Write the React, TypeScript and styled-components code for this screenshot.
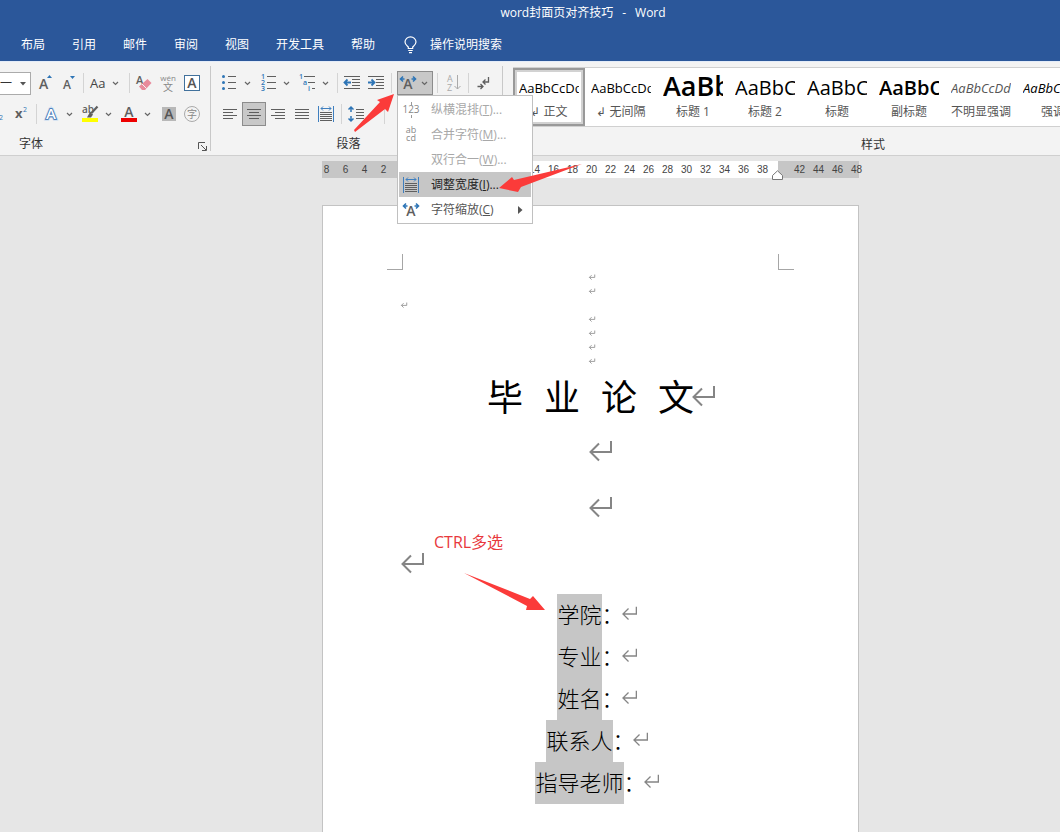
import React from 'react';
import styled, { createGlobalStyle, css } from 'styled-components';

const GlobalStyle = createGlobalStyle`
  * { box-sizing: border-box; }
  body {
    margin: 0;
    background: #e6e6e6;
    overflow: hidden;
    font: 12px/16px "Open Sans", "Noto Sans CJK SC", sans-serif;
    color: #444;
  }
  button, select { font: inherit; color: inherit; }
  svg { overflow: visible; }
`;

const Shell = styled.div`
  min-height: 100vh;
  display: flex;
  flex-direction: column;
  overflow: hidden;
`;

/* ---------- header ---------- */
const Header = styled.header`
  background: #2b579a;
  color: #fff;
  height: 61px;
`;
const TitleBar = styled.div`
  display: flex;
  justify-content: center;
  gap: 9px;
  height: 29px;
  padding: 5px 0 0 106px;
`;
const Tabs = styled.nav`
  display: flex;
  align-items: center;
  height: 32px;
  padding-left: 21px;
  gap: 27px;
`;
const Tab = styled.button`
  border: 0;
  padding: 0;
  background: none;
  white-space: nowrap;
`;
const TellMe = styled(Tab)`
  display: flex;
  align-items: center;
  gap: 13px;
  padding-left: 2px;
`;

/* ---------- ribbon ---------- */
const Ribbon = styled.section`
  position: relative;
  z-index: 2;
  display: flex;
  height: 95px;
  background: #f3f3f3;
  border-top: 1px solid #e3ecf9;
  border-bottom: 1px solid #cfcfcf;
`;
const Group = styled.div<{ $w: number }>`
  display: flex;
  flex-direction: column;
  flex: none;
  width: ${p => p.$w}px;
  padding-top: 9px;
`;
const GroupDivider = styled.div`
  flex: none;
  width: 1px;
  margin: 4px 0;
  background: #c8c8c8;
`;
const Row = styled.div<{ $indent?: number }>`
  display: flex;
  align-items: center;
  height: 24px;
  margin-bottom: 7px;
  padding-left: ${p => p.$indent ?? 0}px;
`;
const Sep = styled.div<{ $w?: number }>`
  flex: none;
  width: ${p => p.$w ?? 5}px;
  height: 20px;
  background: linear-gradient(#d4d4d4, #d4d4d4) center / 1px 100% no-repeat;
`;
const GroupLabel = styled.div<{ $left?: number }>`
  display: flex;
  flex: 1;
  align-items: center;
  justify-content: ${p => (p.$left ? 'flex-start' : 'center')};
  padding-left: ${p => p.$left ?? 0}px;
  color: #333;
`;
const Launcher = styled.button`
  display: flex;
  margin-left: auto;
  padding: 4px 3px 0 0;
  border: 0;
  background: none;
`;
const LauncherSpace = styled.span`
  width: 16px;
`;
const LabelText = styled.span<{ $grow?: boolean }>`
  flex: ${p => (p.$grow ? 1 : 'none')};
  text-align: center;
`;
const Tool = styled.button<{ $w?: number; $on?: boolean }>`
  display: flex;
  flex: none;
  align-items: center;
  justify-content: center;
  width: ${p => p.$w ?? 24}px;
  height: 24px;
  padding: 0;
  background: none;
  border: 0;
  ${p => p.$on && css`
    background: #c8c8c8;
    border: 1px solid #8c8c8c;
  `}
`;
const Split = styled.button`
  display: flex;
  flex: none;
  align-items: center;
  width: 39px;
  height: 24px;
  padding: 0;
  border: 0;
  background: none;
`;
const SplitChevron = styled.span`
  display: flex;
  justify-content: center;
  width: 14px;
`;
const SizeBox = styled.div`
  position: relative;
  width: 31px;
  height: 24px;
  margin-right: 2px;
  padding-top: 1px;
`;
const SizeSelect = styled.select`
  appearance: none;
  width: 31px;
  height: 23px;
  padding: 0;
  border: 1px solid #ababab;
  border-left: 0;
  border-radius: 0;
  background: #fff;
  color: #333;
`;
const SizeCaret = styled.svg`
  position: absolute;
  right: 5px;
  top: 11px;
  pointer-events: none;
`;
const Anchor = styled.div`
  position: relative;
  flex: none;
  margin-left: 3px;
`;

/* ---------- drop-down menu ---------- */
const Menu = styled.div`
  position: absolute;
  z-index: 3;
  left: 0;
  top: 24px;
  width: 136px;
  padding: 1px;
  background: #fff;
  border: 1px solid #c0c0c0;
`;
const MenuItem = styled.button<{ $hot?: boolean }>`
  display: flex;
  align-items: center;
  width: 100%;
  height: 25px;
  padding: 0 8px 0 0;
  border: 0;
  text-align: left;
  white-space: nowrap;
  background: ${p => (p.$hot ? '#c6c6c6' : 'transparent')};
  color: ${p => (p.$hot ? '#222' : '#555')};
  &:disabled { color: #a8a8a8; }
`;
const MenuIcon = styled.span`
  display: flex;
  justify-content: center;
  width: 24px;
  margin-right: 8px;
`;
const MenuText = styled.span`
  flex: 1;
`;

/* ---------- style gallery ---------- */
const StylesGroup = styled.div`
  display: flex;
  flex-direction: column;
  flex: none;
  width: 730px;
  padding: 5px 0 0 10px;
`;
const Gallery = styled.div`
  display: flex;
  height: 60px;
  margin-bottom: 8px;
  background: #fff;
  border: 1px solid #d0d0d0;
  border-left: 0;
`;
const StyleCard = styled.button<{ $on?: boolean }>`
  flex: none;
  width: 72px;
  height: 58px;
  padding: 2px 6px 6px;
  border: 0;
  background: #fff;
  text-align: center;
  white-space: nowrap;
  color: #555;
  ${p => p.$on && css`
    box-shadow: inset 0 0 0 2px #999, inset 0 0 0 4px #d2d2d2;
  `}
`;
const Sample = styled.span<{ $size: number; $bold?: boolean; $italic?: boolean; $color?: string }>`
  display: block;
  height: 34px;
  overflow: hidden;
  text-align: left;
  font-size: ${p => p.$size}px;
  line-height: ${p => (p.$size > 24 ? 32 : 36)}px;
  font-weight: ${p => (p.$bold ? 600 : 400)};
  font-style: ${p => (p.$italic ? 'italic' : 'normal')};
  color: ${p => p.$color ?? '#000'};
`;
const CardName = styled.span`
  display: block;
`;

/* ---------- document ---------- */
const Work = styled.main`
  display: flex;
  flex: 1;
  flex-direction: column;
  align-items: center;
  padding: 5px 0 0 121px;
  background: #e6e6e6;
`;
const Ruler = styled.div`
  display: flex;
  width: 537px;
  height: 17px;
  margin-bottom: 27px;
  font: 10px/17px "Liberation Sans", sans-serif;
  color: #444;
`;
const RulerPart = styled.div<{ $w: number; $white?: boolean; $end?: boolean }>`
  position: relative;
  z-index: ${p => (p.$white ? 1 : 0)};
  display: flex;
  flex: none;
  width: ${p => p.$w}px;
  padding: 0 ${p => (p.$white ? 6 : 10)}px 0 12px;
  justify-content: ${p => (p.$end ? 'flex-end' : 'flex-start')};
  background: ${p => (p.$white ? '#fff' : '#c6c6c6')};
`;
const Tick = styled.span`
  flex: none;
  width: 19px;
  text-align: center;
`;
const IndentMarker = styled.svg`
  position: absolute;
  right: -6px;
  top: 9px;
`;
const Page = styled.article`
  position: relative;
  flex: 1;
  width: 537px;
  min-height: 626px;
  padding: 48px 64px 0;
  background: #fff;
  border: 1px solid #c3c3c3;
  border-bottom: 0;
  color: #000;
`;
const Corners = styled.div`
  display: flex;
  justify-content: space-between;
`;
const Corner = styled.i<{ $side: 'left' | 'right' }>`
  width: 16px;
  height: 16px;
  border-bottom: 1px solid #a6a6a6;
  ${p => (p.$side === 'left'
    ? 'border-right: 1px solid #a6a6a6;'
    : 'border-left: 1px solid #a6a6a6;')}
`;
const Body = styled.div`
  padding: 0 16px;
`;
const Line = styled.div<{ $h: number; $left?: boolean }>`
  display: flex;
  align-items: center;
  justify-content: ${p => (p.$left ? 'flex-start' : 'center')};
  height: ${p => p.$h}px;
`;
const Heading = styled.h1`
  display: flex;
  gap: 21px;
  margin: 0;
  font: 400 36px/52px "Noto Sans CJK SC", sans-serif;
`;
const Fields = styled.div`
  margin-top: 4px;
  font: 300 22px/38px "Noto Sans CJK SC", sans-serif;
`;
const Selected = styled.span`
  padding-bottom: 4px;
  background: #c6c6c6;
`;
const FieldTail = styled.span`
  display: flex;
  align-items: center;
  padding-bottom: 4px;
`;
const MarkSlot = styled.span`
  display: flex;
  width: 0;
`;
const MarkSvg = styled.svg`
  flex: none;
  margin-left: -2px;
`;
const Note = styled.div`
  position: absolute;
  left: 111px;
  top: 324px;
  font-size: 16px;
  line-height: 24px;
  color: #e8383d;
`;
const Arrow = styled.svg<{ $x: number; $y: number }>`
  position: absolute;
  z-index: 4;
  left: ${p => p.$x}px;
  top: ${p => p.$y}px;
  fill: #fb3b3a;
  pointer-events: none;
`;

/* ---------- drawings ---------- */
const INK = '#5f5f5f';
const BLUE = '#2e75b6';
const face = '"Open Sans", sans-serif';

const Chevron = () => (
  <svg width="7" height="5" viewBox="0 0 7 5" fill="none" stroke="#666" strokeWidth="1.2"><path d="M1 1l2.5 2.5L6 1" /></svg>
);
const Mark = ({ size }: { size: 's' | 'm' | 'l' }) => {
  const w = { s: 6, m: 15, l: 23 }[size];
  const h = { s: 6, m: 14, l: 21 }[size];
  return (
    <MarkSlot>
      <MarkSvg width={w} height={h} viewBox="0 0 23 21" fill="none" stroke="#858585" strokeWidth={size === 's' ? 3 : 2}>
        <path d="M22 1v11H2M10 3.500L1.500 12l8.500 8.500" />
      </MarkSvg>
    </MarkSlot>
  );
};
const Bulb = () => (
  <svg width="13" height="18" viewBox="0 0 13 18" fill="none" stroke="#fff" strokeWidth="1.2">
    <path d="M4.300 12.500V11C3 9.800 1 8.500 1 6a5.500 5.200 0 0 1 11 0c0 2.500-2 3.800-3.300 5v1.500zM4.300 14.500h4.400M5 16.700h3" />
  </svg>
);
const GrowA = ({ down }: { down?: boolean }) => (
  <svg width="16" height="18" viewBox="0 0 16 18">
    <text x="2" y="15" fontFamily={face} fontSize={down ? 12 : 14} fontWeight="600" fill={INK}>A</text>
    <path d={down ? 'M9 2h5l-2.500 3z' : 'M10 4h5l-2.500-3z'} fill={BLUE} />
  </svg>
);
const Eraser = () => (
  <svg width="18" height="18" viewBox="0 0 18 18">
    <text x="1" y="10" fontFamily={face} fontSize="11" fontWeight="600" fill={INK}>A</text>
    <path d="M12.500 5l4 4-6.500 7H7l-3-3.500z" fill="#e88a9b" />
    <path d="M7 10l4.500 4.500" stroke="#f3f3f3" strokeWidth="1" />
  </svg>
);
const Pinyin = () => (
  <svg width="18" height="20" viewBox="0 0 18 20" fill="#888">
    <text x="9" y="8" textAnchor="middle" fontFamily={face} fontSize="8">wén</text>
    <text x="9" y="18" textAnchor="middle" fontFamily="Noto Sans CJK SC" fontSize="10">文</text>
  </svg>
);
const BoxedA = () => (
  <svg width="18" height="18" viewBox="0 0 18 18">
    <rect x="1.500" y="1.500" width="15" height="15" fill="#fff" stroke="#41719c" />
    <text x="9" y="14" textAnchor="middle" fontFamily={face} fontSize="14" fontWeight="600" fill="#555">A</text>
  </svg>
);
const Super = () => (
  <svg width="16" height="16" viewBox="0 0 16 16">
    <text x="3" y="12" fontFamily={face} fontSize="13" fontWeight="700" fill={INK}>x</text>
    <text x="11" y="6" fontFamily={face} fontSize="7" fill={BLUE}>2</text>
  </svg>
);
const SubTwo = () => (
  <svg width="8" height="16" viewBox="0 0 8 16"><text x="-1" y="14" fontFamily={face} fontSize="7" fill={BLUE}>2</text></svg>
);
const GlowA = () => (
  <svg width="22" height="20" viewBox="0 0 22 20">
    <text x="11" y="15" textAnchor="middle" fontFamily={face} fontSize="15" fontWeight="600" fill="#fff" stroke="#c3d9f1" strokeWidth="3">A</text>
    <text x="11" y="15" textAnchor="middle" fontFamily={face} fontSize="15" fontWeight="600" fill="#fff" stroke="#3a70b0" strokeWidth="1.600" paintOrder="stroke">A</text>
  </svg>
);
const Highlighter = () => (
  <svg width="22" height="20" viewBox="0 0 22 20">
    <text x="3" y="9" fontFamily={face} fontSize="10" fontWeight="600" fill={INK}>ab</text>
    <path d="M18.500 2.500L12.500 9" stroke={INK} strokeWidth="2.200" />
    <path d="M11 8l3 2.500-2 3H8z" fill={INK} />
    <rect x="3" y="14" width="16" height="4" fill="#ff0" />
  </svg>
);
const FontColor = () => (
  <svg width="22" height="20" viewBox="0 0 22 20">
    <text x="11" y="13" textAnchor="middle" fontFamily={face} fontSize="14" fontWeight="600" fill={INK}>A</text>
    <rect x="3" y="14" width="16" height="4" fill="#e00" />
  </svg>
);
const ShadedA = () => (
  <svg width="16" height="16" viewBox="0 0 16 16">
    <rect x="1" y="1" width="14" height="14" fill="#b8b8b8" />
    <text x="8" y="13" textAnchor="middle" fontFamily={face} fontSize="14" fontWeight="600" fill="#555">A</text>
  </svg>
);
const CircledChar = () => (
  <svg width="18" height="18" viewBox="0 0 18 18">
    <circle cx="9" cy="9" r="7.500" fill="none" stroke="#aaa" />
    <text x="9" y="13" textAnchor="middle" fontFamily="Noto Sans CJK SC" fontSize="10" fill="#888">字</text>
  </svg>
);
const Bullets = () => (
  <svg width="22" height="18" viewBox="0 0 22 18">
    {[3, 9, 15].map(y => (
      <g key={y}><circle cx="5.500" cy={y - 0.5} r="1.500" fill={BLUE} /><path d={`M10 ${y - 0.5}h8`} stroke={INK} /></g>
    ))}
  </svg>
);
const Numbers = () => (
  <svg width="22" height="20" viewBox="0 0 22 20">
    {[1, 2, 3].map(n => (
      <g key={n}>
        <text x="4" y={n * 6} fontFamily={face} fontSize="7" fontWeight="600" fill={BLUE}>{n}</text>
        <path d={`M10 ${n * 6 - 2.5}h9`} stroke={INK} />
      </g>
    ))}
  </svg>
);
const Multi = () => (
  <svg width="22" height="20" viewBox="0 0 22 20" fontFamily={face} fontSize="7" fontWeight="600" fill={BLUE}>
    <text x="3" y="6">1</text><text x="7" y="12">a</text><text x="12" y="18">i</text>
    <path d="M8 3.500h11M12 9.500h7M16 15.500h3" stroke={INK} />
  </svg>
);
const Dent = ({ inward }: { inward?: boolean }) => (
  <svg width="18" height="16" viewBox="0 0 18 16" fill="none" stroke={INK}>
    <path d="M1 1.500h16M9 4.500h8M9 7.500h8M9 10.500h8M1 13.500h16" />
    <path d={inward ? 'M1 7.500h6M4.500 4.500l3 3-3 3' : 'M8 7.500H2M4.500 4.500l-3 3 3 3'} stroke={BLUE} strokeWidth="1.800" />
  </svg>
);
const WideA = () => (
  <svg width="18" height="16" viewBox="0 0 18 16">
    <text x="9" y="14" textAnchor="middle" fontFamily={face} fontSize="14" fontWeight="600" fill={INK}>A</text>
    <path d="M5.500 4H2M4 1.500L1.500 4 4 6.500M12.500 4H16M14 1.500L16.500 4 14 6.500" fill="none" stroke={BLUE} strokeWidth="1.600" />
  </svg>
);
const SortAZ = () => (
  <svg width="16" height="20" viewBox="0 0 16 20" fill="#aaa" fontFamily={face} fontSize="9">
    <text x="1" y="9">A</text><text x="1" y="18">Z</text>
    <path d="M11.500 2v14M8.500 13l3 3 3-3" fill="none" stroke="#aaa" />
  </svg>
);
const ShowMarks = () => (
  <svg width="16" height="16" viewBox="0 0 16 16" fill="none" stroke={INK} strokeWidth="1.300">
    <path d="M13.500 2v5H8M10.500 4.500L8 7l2.500 2.500M2.500 11.500h5M5.500 9L8 11.500 5.500 14" />
  </svg>
);
const Lines = ({ rows }: { rows: number[][] }) => (
  <svg width="16" height="14" viewBox="0 0 16 14">
    {rows.map(([x, w], i) => <rect key={i} x={x} y={2 + i * 3} width={w} height="1" fill={INK} />)}
  </svg>
);
const Distribute = () => (
  <svg width="18" height="18" viewBox="0 0 18 18" fill="none" stroke={INK}>
    <path d="M3 7.500h12M3 9.500h12M3 11.500h12M3 13.500h12M3 15.500h12" />
    <path d="M1.500 1v16M16.500 1v16M4 3.500h10M6 1.500l-2 2 2 2M12 1.500l2 2-2 2" stroke="#3f7fbf" />
  </svg>
);
const Spacing = () => (
  <svg width="18" height="18" viewBox="0 0 18 18" fill="none" stroke={INK}>
    <path d="M9 4.500h8M9 7.500h8M9 10.500h8M9 13.500h8" />
    <path d="M4 2v5M4 11v5M1.500 4.500L4 2l2.500 2.500M1.500 13.500L4 16l2.500-2.500" stroke={BLUE} strokeWidth="1.500" />
  </svg>
);
const Shading = () => (
  <svg width="14" height="14" viewBox="0 0 14 14" fill="none" stroke={INK}><path d="M.5 8.500h3v3h-3zM7 3l5 5-4 4" /></svg>
);
const Digits = () => (
  <svg width="20" height="18" viewBox="0 0 20 18" fill="#888">
    <text x="10" y="12" textAnchor="middle" fontFamily={face} fontSize="10">123</text>
    <path d="M10.500 1v3M10.500 14v3" stroke="#999" />
  </svg>
);
const AbCd = () => (
  <svg width="20" height="20" viewBox="0 0 20 20" fill="#888" fontFamily={face} fontSize="9">
    <text x="10" y="8" textAnchor="middle">ab</text><text x="10" y="16" textAnchor="middle">cd</text>
  </svg>
);
const LauncherIcon = () => (
  <svg width="9" height="9" viewBox="0 0 9 9" fill="none" stroke="#555"><path d="M.5 7V.5H7M3 3l5 5M8.500 4v4.500H4" /></svg>
);

const tabs = ['布局', '引用', '邮件', '审阅', '视图', '开发工具', '帮助'];
const aligns: [string, number[][]][] = [
  ['左对齐', [[1, 14], [1, 10], [1, 14], [1, 10]]],
  ['居中', [[1, 14], [3, 10], [1, 14], [3, 10]]],
  ['右对齐', [[1, 14], [5, 10], [1, 14], [5, 10]]],
  ['两端对齐', [[1, 14], [1, 14], [1, 14], [1, 14]]],
];
const cards = [
  { name: '↲ 正文', text: 'AaBbCcDd', size: 13, on: true },
  { name: '↲ 无间隔', text: 'AaBbCcDd', size: 13 },
  { name: '标题 1', text: 'AaBb', size: 27, bold: true },
  { name: '标题 2', text: 'AaBbC', size: 20 },
  { name: '标题', text: 'AaBbC', size: 20 },
  { name: '副标题', text: 'AaBbC', size: 20, bold: true },
  { name: '不明显强调', text: 'AaBbCcDd', size: 13, italic: true, color: '#555' },
  { name: '强调', text: 'AaBbCcDd', size: 13, italic: true },
];
const fields = ['学院', '专业', '姓名', '联系人', '指导老师'];
const range = (from: number, to: number) =>
  Array.from({ length: (to - from) / 2 + 1 }, (_, i) => from + i * 2);

const SplitTool = ({ label, children }: { label: string; children: React.ReactNode }) => (
  <Split aria-label={label}>{children}<SplitChevron><Chevron /></SplitChevron></Split>
);

const LayoutMenu = () => (
  <Menu role="menu">
    <MenuItem role="menuitem" disabled><MenuIcon><Digits /></MenuIcon><MenuText>纵横混排(<u>T</u>)...</MenuText></MenuItem>
    <MenuItem role="menuitem" disabled><MenuIcon><AbCd /></MenuIcon><MenuText>合并字符(<u>M</u>)...</MenuText></MenuItem>
    <MenuItem role="menuitem" disabled><MenuIcon /><MenuText>双行合一(<u>W</u>)...</MenuText></MenuItem>
    <MenuItem role="menuitem" $hot><MenuIcon><Distribute /></MenuIcon><MenuText>调整宽度(<u>I</u>)...</MenuText></MenuItem>
    <MenuItem role="menuitem">
      <MenuIcon><WideA /></MenuIcon><MenuText>字符缩放(<u>C</u>)</MenuText>
      <svg width="5" height="8" viewBox="0 0 5 8"><path d="M0 0l4.500 4L0 8z" fill="#555" /></svg>
    </MenuItem>
  </Menu>
);

export default function App() {
  return (
    <Shell>
      <GlobalStyle />
      <Header>
        <TitleBar><span>word封面页对齐技巧</span><span>-</span><span>Word</span></TitleBar>
        <Tabs>
          {tabs.map(t => <Tab key={t}>{t}</Tab>)}
          <TellMe><Bulb />操作说明搜索</TellMe>
        </Tabs>
      </Header>

      <Ribbon>
        <Group $w={210}>
          <Row>
            <SizeBox>
              <SizeSelect aria-label="字号" defaultValue="一"><option>一</option></SizeSelect>
              <SizeCaret width="6" height="4" viewBox="0 0 6 4"><path d="M0 0h6L3 3.500z" fill="#555" /></SizeCaret>
            </SizeBox>
            <Tool aria-label="增大字号"><GrowA /></Tool>
            <Tool aria-label="减小字号"><GrowA down /></Tool>
            <Sep />
            <Tool $w={40} aria-label="更改大小写">
              <svg width="18" height="18" viewBox="0 0 18 18"><text x="0" y="14" fontFamily={face} fontSize="13" fill="#444">Aa</text></svg>
              <SplitChevron><Chevron /></SplitChevron>
            </Tool>
            <Sep $w={6} />
            <Tool aria-label="清除格式"><Eraser /></Tool>
            <Tool aria-label="拼音指南"><Pinyin /></Tool>
            <Tool aria-label="字符边框"><BoxedA /></Tool>
          </Row>
          <Row>
            <Tool $w={8} aria-label="下标"><SubTwo /></Tool>
            <Tool aria-label="上标"><Super /></Tool>
            <Sep $w={8} />
            <SplitTool label="文本效果"><GlowA /></SplitTool>
            <SplitTool label="突出显示"><Highlighter /></SplitTool>
            <SplitTool label="字体颜色"><FontColor /></SplitTool>
            <Tool $w={23} aria-label="字符底纹"><ShadedA /></Tool>
            <Tool aria-label="带圈字符"><CircledChar /></Tool>
          </Row>
          <GroupLabel $left={19}>
            <LabelText>字体</LabelText>
            <Launcher aria-label="字体设置"><LauncherIcon /></Launcher>
          </GroupLabel>
        </Group>
        <GroupDivider />

        <Group $w={291}>
          <Row $indent={7}>
            <SplitTool label="项目符号"><Bullets /></SplitTool>
            <SplitTool label="编号"><Numbers /></SplitTool>
            <SplitTool label="多级列表"><Multi /></SplitTool>
            <Sep />
            <Tool aria-label="减少缩进量"><Dent /></Tool>
            <Tool aria-label="增加缩进量"><Dent inward /></Tool>
            <Sep $w={6} />
            <Anchor>
              <Tool $w={36} $on aria-label="中文版式" aria-haspopup="menu">
                <WideA /><SplitChevron><Chevron /></SplitChevron>
              </Tool>
              <LayoutMenu />
              <Arrow $x={-44} $y={20} width="44" height="42" viewBox="0 0 44 42">
                <path d="M41 3L35 21l-3-3L2 41l-1-2 26-28-3-2z" />
              </Arrow>
              <Arrow $x={102} $y={92} width="86" height="30" viewBox="0 0 86 30">
                <path d="M0 25l13-11 2 3L83 1 22 24l-3 5z" />
              </Arrow>
            </Anchor>
            <Sep $w={9} />
            <Tool aria-label="排序"><SortAZ /></Tool>
            <Sep />
            <Tool aria-label="显示编辑标记"><ShowMarks /></Tool>
          </Row>
          <Row $indent={7}>
            {aligns.map(([label, rows]) => (
              <Tool key={label} $on={label === '居中'} aria-label={label}><Lines rows={rows} /></Tool>
            ))}
            <Tool aria-label="分散对齐"><Distribute /></Tool>
            <Sep $w={6} />
            <Tool aria-label="行距"><Spacing /></Tool>
            <Sep $w={33} />
            <Tool $w={8} aria-label="底纹"><Shading /></Tool>
          </Row>
          <GroupLabel><LabelText $grow>段落</LabelText><LauncherSpace /></GroupLabel>
        </Group>
        <GroupDivider />

        <StylesGroup>
          <Gallery>
            {cards.map(c => (
              <StyleCard key={c.name} $on={c.on}>
                <Sample $size={c.size} $bold={c.bold} $italic={c.italic} $color={c.color}>{c.text}</Sample>
                <CardName>{c.name}</CardName>
              </StyleCard>
            ))}
          </Gallery>
          <GroupLabel>样式</GroupLabel>
        </StylesGroup>
      </Ribbon>

      <Work>
        <Ruler>
          <RulerPart $w={81} $end>{range(2, 8).reverse().map(n => <Tick key={n}>{n}</Tick>)}</RulerPart>
          <RulerPart $w={375} $white $end>
            {range(2, 38).map(n => <Tick key={n}>{n}</Tick>)}
            <IndentMarker width="12" height="11" viewBox="0 0 12 11">
              <path d="M.5 9.500V5.500L5.500.8l5 4.700v4z" fill="#fff" stroke="#777" />
            </IndentMarker>
          </RulerPart>
          <RulerPart $w={81}>{range(42, 48).map(n => <Tick key={n}>{n}</Tick>)}</RulerPart>
        </Ruler>
        <Page>
          <Corners><Corner $side="left" /><Corner $side="right" /></Corners>
          <Body>
            {[0, 1, 2, 3, 4, 5, 6].map(i => (
              <Line key={i} $h={14} $left={i === 2}><Mark size="s" /></Line>
            ))}
            <Line $h={54}>
              <Heading>{['毕', '业', '论', '文'].map(c => <span key={c}>{c}</span>)}</Heading>
              <Mark size="l" />
            </Line>
            <Line $h={56}><Mark size="l" /></Line>
            <Line $h={56}><Mark size="l" /></Line>
            <Line $h={56} $left><Mark size="l" /></Line>
            <Fields>
              {fields.map(f => (
                <Line key={f} $h={42}><Selected>{f}</Selected><FieldTail>：<Mark size="m" /></FieldTail></Line>
              ))}
            </Fields>
          </Body>
          <Note>CTRL多选</Note>
          <Arrow $x={140} $y={366} width="84" height="40" viewBox="0 0 84 40">
            <path d="M1 1l66 26 3-3 12 14H63l1-4z" />
          </Arrow>
        </Page>
      </Work>
    </Shell>
  );
}
